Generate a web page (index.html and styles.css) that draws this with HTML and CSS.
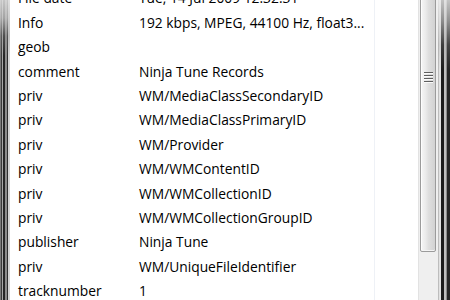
FILE: index.html
```
<!DOCTYPE html>
<html>
<head>
<meta charset="utf-8">
<link rel="stylesheet" href="styles.css">
</head>
<body>
<div class="window">
  <div class="frame-left"></div>
  <div class="list-area">
    <div class="list">
      <div class="rows">
        <div class="row"><span class="key">File date</span><span class="val">Tue, 14 Jul 2009 12:32:31</span></div>
        <div class="row"><span class="key">Info</span><span class="val">192 kbps, MPEG, 44100 Hz, float3...</span></div>
        <div class="row"><span class="key">geob</span><span class="val"></span></div>
        <div class="row"><span class="key">comment</span><span class="val">Ninja Tune Records</span></div>
        <div class="row"><span class="key">priv</span><span class="val">WM/MediaClassSecondaryID</span></div>
        <div class="row"><span class="key">priv</span><span class="val">WM/MediaClassPrimaryID</span></div>
        <div class="row"><span class="key">priv</span><span class="val">WM/Provider</span></div>
        <div class="row"><span class="key">priv</span><span class="val">WM/WMContentID</span></div>
        <div class="row"><span class="key">priv</span><span class="val">WM/WMCollectionID</span></div>
        <div class="row"><span class="key">priv</span><span class="val">WM/WMCollectionGroupID</span></div>
        <div class="row"><span class="key">publisher</span><span class="val">Ninja Tune</span></div>
        <div class="row"><span class="key">priv</span><span class="val">WM/UniqueFileIdentifier</span></div>
        <div class="row"><span class="key">tracknumber</span><span class="val">1</span></div>
      </div>
    </div>
    <div class="filler"></div>
  </div>
  <div class="scrollbar">
    <div class="thumb"><div class="gripper"></div></div>
  </div>
  <div class="frame-right"></div>
</div>
</body>
</html>
```
FILE: styles.css
```
html, body {
  margin: 0;
  padding: 0;
  width: 450px;
  height: 300px;
  overflow: hidden;
  background: #fff;
}

.window {
  display: flex;
  width: 450px;
  height: 300px;
  overflow: hidden;
}

.frame-left {
  flex: 0 0 10px;
  background:
    linear-gradient(to bottom, rgba(225,225,225,0.85) 0, rgba(205,205,205,0.75) 18px, rgba(150,150,150,0.35) 36px, rgba(0,0,0,0) 56px),
    linear-gradient(to right, #7a7a7a 0 1px, #3a3a3a 1px 2px, #a8a8a8 2px 3px, #262626 3px 5px, #8c8c8c 5px 7px, #303030 7px 8px, #d6d6d6 8px 10px);
}

.list-area {
  flex: 1;
  display: flex;
  background: #fff;
  overflow: hidden;
}

.list {
  flex: 0 0 364px;
  border-right: 1px solid #eef1f6;
  overflow: hidden;
}

.filler {
  flex: 1;
}

.rows {
  margin-top: -13.6px;
  padding-left: 8px;
}

.row {
  display: grid;
  grid-template-columns: 121px 1fr;
  height: 24.4px;
  line-height: 24.4px;
  font-family: "Open Sans", "Noto Sans", sans-serif;
  font-size: 13.8px;
  color: #000;
  white-space: nowrap;
}

.scrollbar {
  flex: 0 0 19px;
  border-left: 1px solid #e2e2e2;
  background: #efefef;
  display: flex;
  flex-direction: column;
  align-items: flex-start;
}

.thumb {
  margin-top: -97px;
  margin-left: 1px;
  width: 14px;
  height: 347px;
  border: 1px solid #9b9b9b;
  border-radius: 2px;
  background: linear-gradient(to right, #f6f6f6 0, #ececec 30%, #dedede 55%, #d2d2d2 100%);
  box-shadow: inset 1px 0 0 #fdfdfd, inset 0 -1px 0 #f4f4f4;
  display: flex;
  align-items: center;
  justify-content: center;
}

.gripper {
  width: 9px;
  height: 11px;
  background: repeating-linear-gradient(to bottom, #5e5e5e 0 1px, #fafafa 1px 2px, transparent 2px 3px);
}

.frame-right {
  flex: 0 0 12px;
  background:
    linear-gradient(to bottom, rgba(235,235,235,0.8) 0, rgba(220,220,220,0.6) 20px, rgba(160,160,160,0.25) 45px, rgba(0,0,0,0) 70px),
    linear-gradient(to right, #bdbdbd 0 1px, #e2e2e2 1px 3px, #1c1c1c 3px 6px, #bfbfbf 6px 8px, #8a8a8a 8px 9px, #262626 9px 12px);
}
```
